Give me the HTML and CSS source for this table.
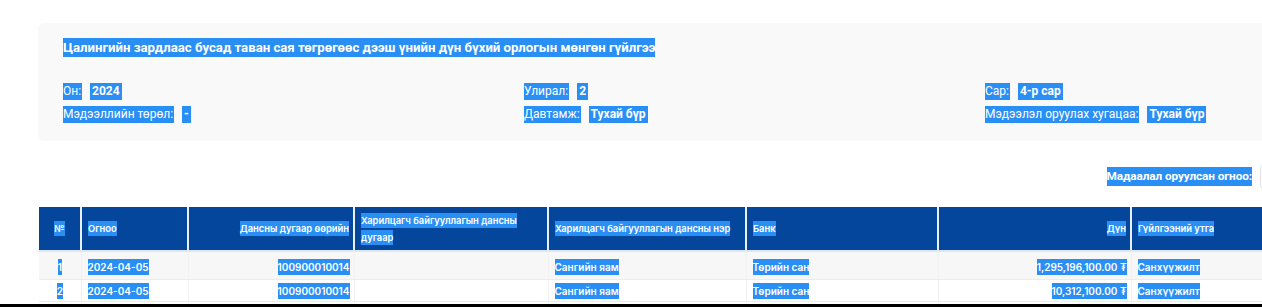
FILE: index.html
```html
<!DOCTYPE html>
<html lang="mn">
<head>
<meta charset="utf-8">
<title>Гүйлгээ</title>
<link rel="stylesheet" href="styles.css">
</head>
<body>
<div class="page">
  <section class="card">
    <h1 class="title"><span class="sel">Цалингийн зардлаас бусад таван сая төгрөгөөс дээш үнийн дүн бүхий орлогын мөнгөн гүйлгээ</span></h1>
    <div class="info">
      <div class="item"><span class="sel lbl">Он:</span><span class="sel val">2024</span></div>
      <div class="item"><span class="sel lbl">Улирал:</span><span class="sel val">2</span></div>
      <div class="item"><span class="sel lbl">Сар:</span><span class="sel val">4-р сар</span></div>
      <div class="item"><span class="sel lbl">Мэдээллийн төрөл:</span><span class="sel val">-</span></div>
      <div class="item"><span class="sel lbl">Давтамж:</span><span class="sel val">Тухай бүр</span></div>
      <div class="item"><span class="sel lbl">Мэдээлэл оруулах хугацаа:</span><span class="sel val">Тухай бүр</span></div>
    </div>
  </section>

  <div class="dateRow">
    <span class="sel dlbl">Мадаалал оруулсан огноо:</span>
    <span class="dateBox"></span>
  </div>

  <table class="grid">
    <colgroup>
      <col class="c1"><col class="c2"><col class="c3"><col class="c4"><col class="c5"><col class="c6"><col class="c7"><col class="c8">
    </colgroup>
    <thead>
      <tr>
        <th class="center"><span class="sel">№</span></th>
        <th><span class="sel">Огноо</span></th>
        <th class="right"><span class="sel">Дансны дугаар өөрийн</span></th>
        <th><span class="sel">Харилцагч байгууллагын дансны дугаар</span></th>
        <th><span class="sel">Харилцагч байгууллагын дансны нэр</span></th>
        <th><span class="sel">Банк</span></th>
        <th class="right"><span class="sel">Дүн</span></th>
        <th><span class="sel">Гүйлгээний утга</span></th>
      </tr>
    </thead>
    <tbody>
      <tr>
        <td class="center"><span class="sel">1</span></td>
        <td><span class="sel">2024-04-05</span></td>
        <td class="right"><span class="sel">100900010014</span></td>
        <td></td>
        <td><span class="sel">Сангийн яам</span></td>
        <td><span class="sel">Төрийн сан</span></td>
        <td class="right"><span class="sel">1,295,196,100.00 ₮</span></td>
        <td><span class="sel">Санхүүжилт</span></td>
      </tr>
      <tr>
        <td class="center"><span class="sel">2</span></td>
        <td><span class="sel">2024-04-05</span></td>
        <td class="right"><span class="sel">100900010014</span></td>
        <td></td>
        <td><span class="sel">Сангийн яам</span></td>
        <td><span class="sel">Төрийн сан</span></td>
        <td class="right"><span class="sel">10,312,100.00 ₮</span></td>
        <td><span class="sel">Санхүүжилт</span></td>
      </tr>
    </tbody>
  </table>
</div>
<div class="edge"></div>
</body>
</html>
```

FILE: styles.css
```css
html, body {
  margin: 0;
  padding: 0;
  background: #ffffff;
  overflow: hidden;
}

body {
  font-family: Roboto, "Liberation Sans", sans-serif;
  color: #ffffff;
}

.page {
  width: 1500px;
  padding: 23px 0 0 38px;
  box-sizing: border-box;
}

.sel {
  background: #2a8ff5;
  color: #ffffff;
  padding: 2px 0;
}

.card {
  background: #f9f9f9;
  border-radius: 6px;
  padding: 15px 25px 18px 25px;
  width: 1424px;
  box-sizing: border-box;
}

.title {
  margin: 0;
  font-size: 13.2px;
  font-weight: 700;
  line-height: 19px;
}

.info {
  margin-top: 26px;
  display: grid;
  grid-template-columns: 461px 461px 461px;
  row-gap: 6px;
}

.item {
  display: flex;
  gap: 8px;
  font-size: 12px;
  line-height: 17px;
}

.item .sel {
  padding-top: 0;
  padding-bottom: 0;
}

.lbl {
  font-weight: 400;
  padding-right: 1px;
}

.val {
  font-weight: 700;
  padding-left: 2px;
  padding-right: 2px;
}

.dateRow {
  margin-top: 26px;
  display: flex;
  justify-content: flex-end;
  align-items: center;
  gap: 8px;
  padding-right: 40px;
  height: 19px;
}

.dateRow .dlbl {
  font-size: 11.8px;
  font-weight: 700;
  line-height: 19px;
  letter-spacing: -0.1px;
  padding: 0;
}

.dateBox {
  width: 200px;
  height: 24px;
  border: 1px solid #e3e3e3;
  border-radius: 4px;
  box-sizing: border-box;
}

.grid {
  margin-top: 21px;
  margin-left: 1px;
  border-collapse: collapse;
  table-layout: fixed;
  font-family: Inter, "Noto Sans", sans-serif;
  font-size: 10px;
  font-weight: 600;
}

.c1 { width: 42px; }
.c2 { width: 107px; }
.c3 { width: 166px; }
.c4 { width: 194px; }
.c5 { width: 198px; }
.c6 { width: 192px; }
.c7 { width: 193px; }
.c8 { width: 190px; }

.grid th {
  background: #03469c;
  height: 44px;
  padding: 0 4px 0 6px;
  text-align: left;
  font-size: 9.4px;
  font-weight: 600;
  line-height: 17px;
  border-right: 2px solid #e8f0fa;
  border-bottom: 2px solid #dce8f7;
  vertical-align: middle;
  box-sizing: border-box;
}

.grid td {
  padding: 0 4px 0 6px;
  line-height: 16px;
  border-right: 1px solid #f1f1f1;
  border-bottom: 1px solid #ececec;
  vertical-align: middle;
}

.grid tbody tr:nth-child(1) td {
  background: #f7f7f7;
  height: 25px;
  padding-top: 2px;
}

.grid tbody tr:nth-child(2) td {
  background: #ffffff;
  height: 21px;
}

.grid .center { text-align: center; padding-left: 0; padding-right: 0; }
.grid .right { text-align: right; }

.edge {
  position: fixed;
  left: 0;
  right: 0;
  bottom: 0;
  height: 3px;
  background: #000000;
}
```
